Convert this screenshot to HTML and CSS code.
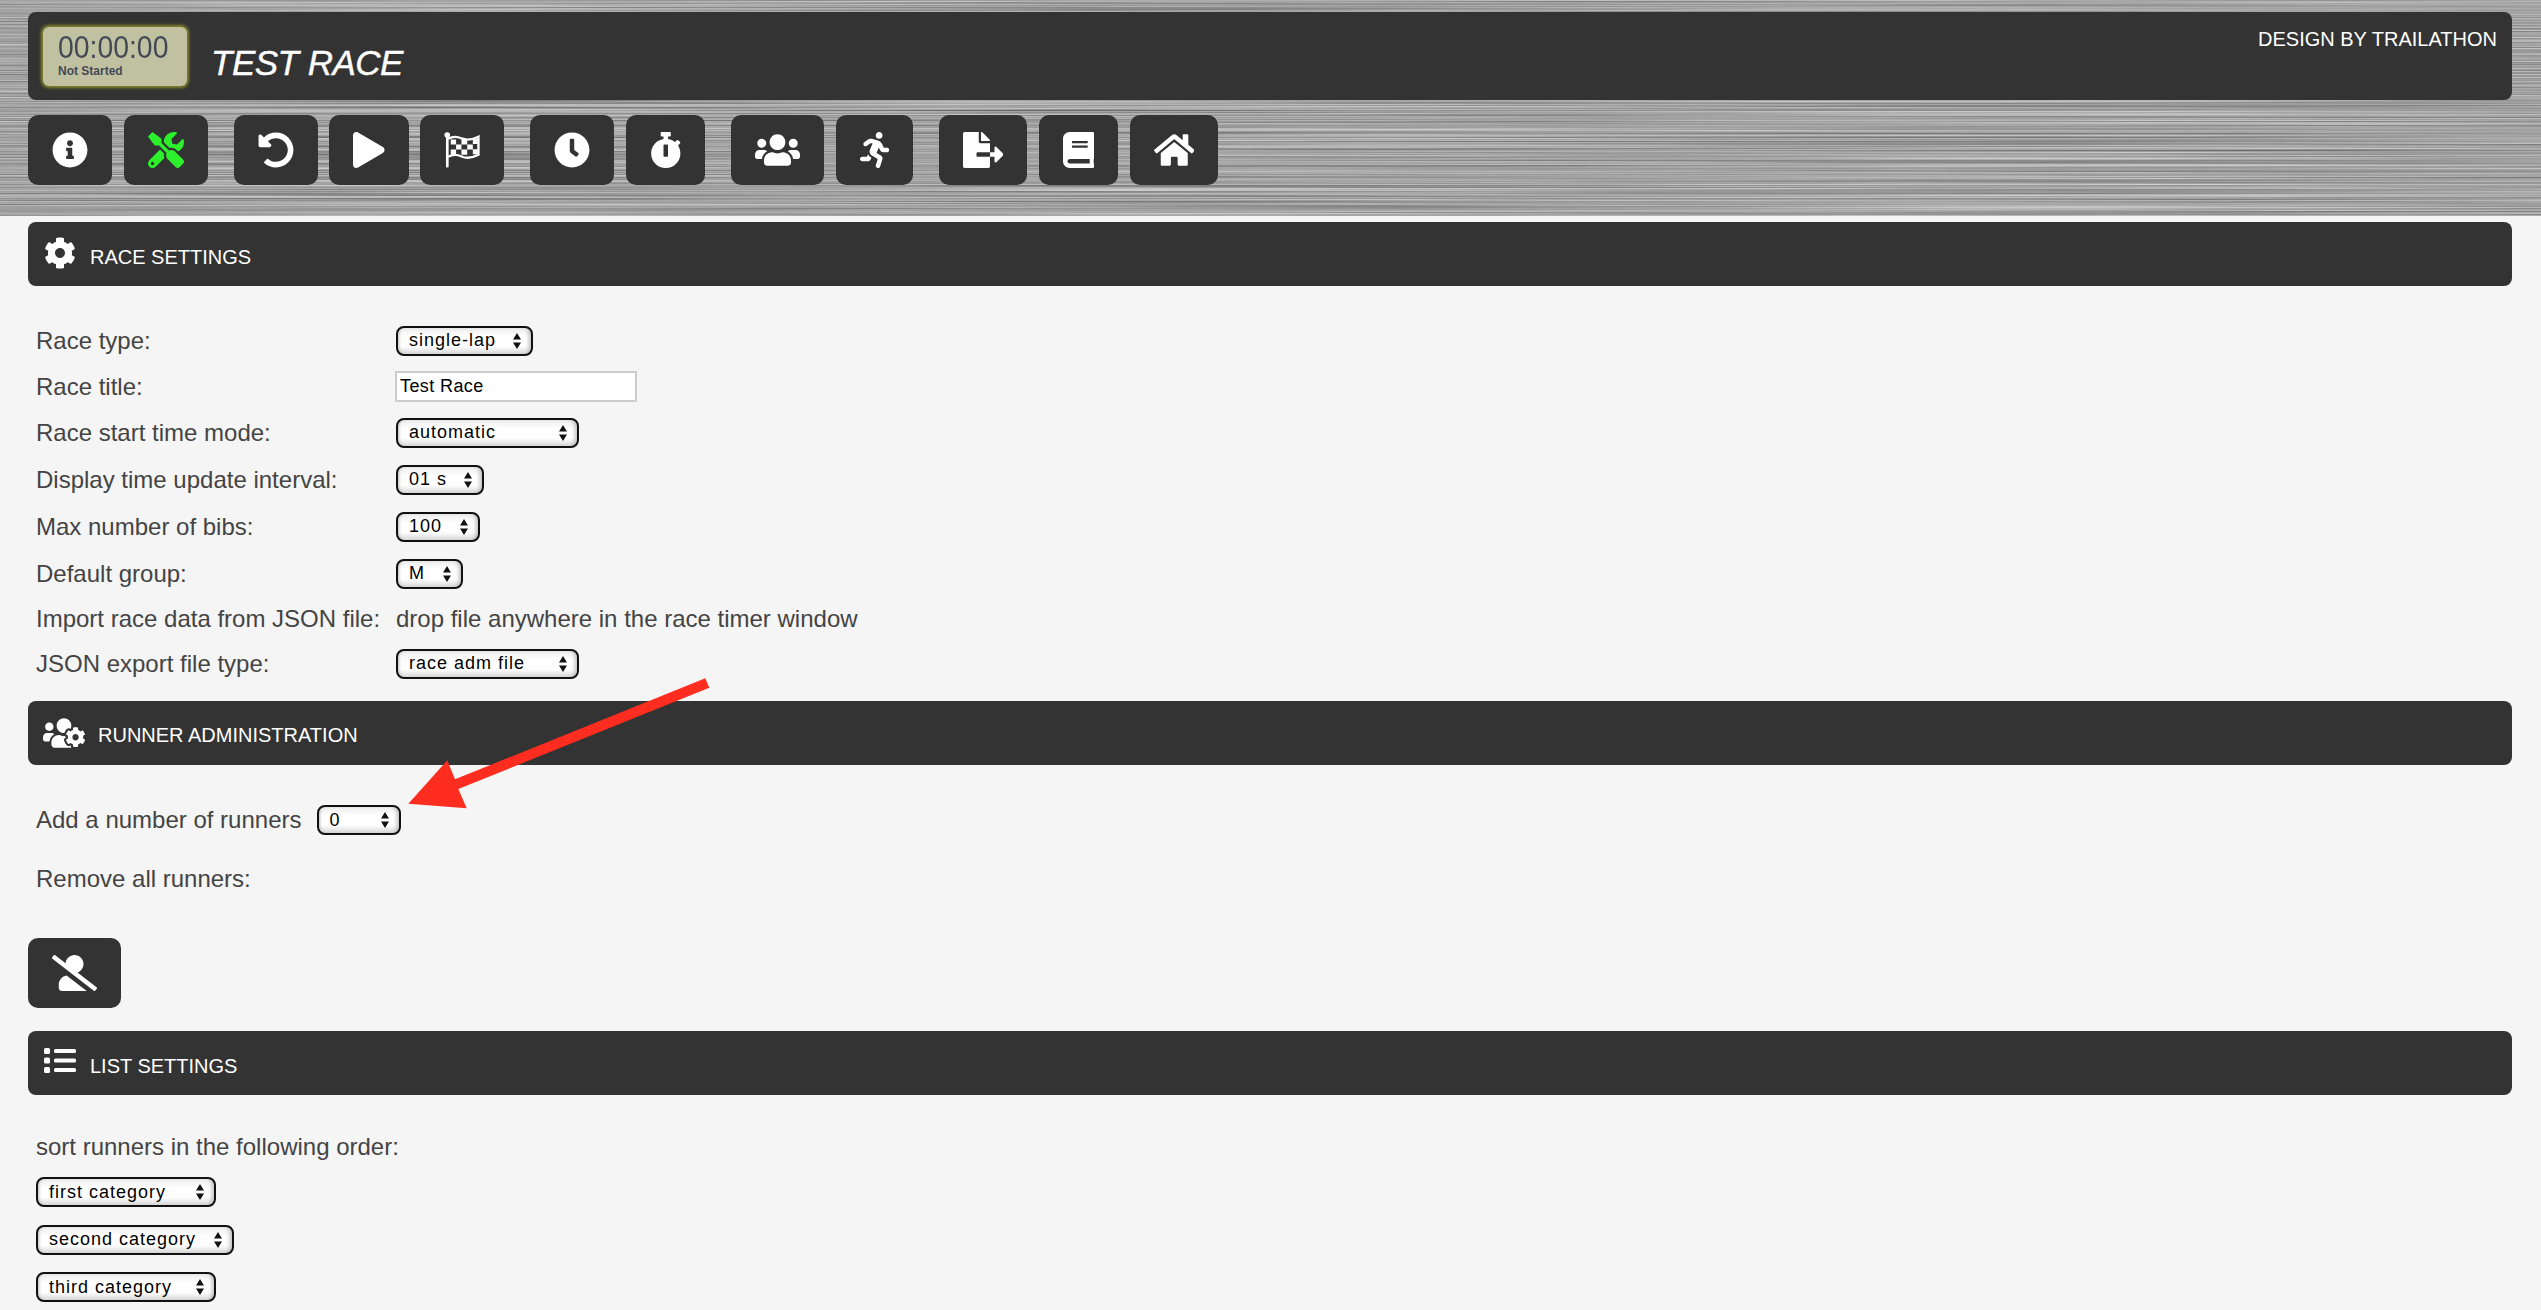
FILE: index.html
```html
<!DOCTYPE html>
<html lang="en">
<head>
  <meta charset="UTF-8">
  <title>Test Race</title>
  <link rel="stylesheet" href="styles.css">
</head>
<body>

  <header class="top">
    <div class="title-bar">
      <div class="timer">
        <div class="digits"><span>00:00:00</span></div>
        <div class="state">Not Started</div>
      </div>
      <h1 class="race-name">TEST RACE</h1>
      <div class="credit">DESIGN BY TRAILATHON</div>
    </div>

    <nav class="toolbar">
      <div class="tool-group">
        <button class="tool" title="Info"><svg class="icon" viewBox="0 0 512 512"><path d="M256 8C119.043 8 8 119.083 8 256c0 136.997 111.043 248 248 248s248-111.003 248-248C504 119.083 392.957 8 256 8zm0 110c23.196 0 42 18.804 42 42s-18.804 42-42 42-42-18.804-42-42 18.804-42 42-42zm56 254c0 6.627-5.373 12-12 12h-88c-6.627 0-12-5.373-12-12v-24c0-6.627 5.373-12 12-12h12v-64h-12c-6.627 0-12-5.373-12-12v-24c0-6.627 5.373-12 12-12h64c6.627 0 12 5.373 12 12v100h12c6.627 0 12 5.373 12 12v24z"/></svg></button>
        <button class="tool active" title="Settings"><svg class="icon" viewBox="0 0 512 512"><path d="M501.1 395.7L384 278.6c-23.1-23.1-57.6-27.6-85.4-13.9L192 158.1V96L64 0 0 64l96 128h62.1l106.6 106.6c-13.6 27.8-9.2 62.3 13.9 85.4l117.1 117.1c14.6 14.6 38.2 14.6 52.7 0l52.7-52.7c14.5-14.6 14.5-38.2-.1-52.7zM331.7 225c28.3 0 54.9 11 74.9 31l19.4 19.4c15.8-6.9 30.8-16.5 43.8-29.5 37.1-37.1 49.7-89.3 37.9-136.7-2.2-9-13.5-12.1-20.1-5.5l-74.4 74.4-67.9-11.3L334 98.9l74.4-74.4c6.6-6.6 3.4-17.9-5.7-20.2-47.4-11.7-99.6.9-136.6 37.9-28.5 28.5-41.9 66.1-41.2 103.6l82.1 82.1c8.1-1.9 16.5-2.9 24.7-2.9zm-103.9 82l-56.7-56.7L18.7 402.8c-25 25-25 65.5 0 90.5s65.5 25 90.5 0l123.6-123.6c-7.6-19.9-9.9-41.6-5-62.7zM64 472c-13.2 0-24-10.8-24-24 0-13.3 10.7-24 24-24s24 10.7 24 24c0 13.2-10.7 24-24 24z"/></svg></button>
      </div>
      <div class="tool-group">
        <button class="tool" title="Reset"><svg class="icon" viewBox="0 0 512 512"><path d="M255.545 8c-66.269.119-126.438 26.233-170.86 68.685L48.971 40.971C33.851 25.851 8 36.559 8 57.941V192c0 13.255 10.745 24 24 24h134.059c21.382 0 32.09-25.851 16.971-40.971l-41.75-41.75c30.864-28.899 70.801-44.907 113.23-45.273 92.398-.798 170.283 73.977 169.484 169.442C423.236 348.009 349.816 424 256 424c-41.127 0-79.997-14.678-110.63-41.556-4.743-4.161-11.906-3.908-16.368.553L89.34 422.659c-4.872 4.872-4.631 12.815.482 17.433C133.798 479.813 192.074 504 256 504c136.966 0 247.999-111.033 248-247.998C504.001 119.193 392.354 7.755 255.545 8z"/></svg></button>
        <button class="tool" title="Start"><svg class="icon" viewBox="0 0 448 512"><path d="M424.4 214.7L72.4 6.6C43.8-10.3 0 6.1 0 47.9V464c0 37.5 40.7 60.1 72.4 41.3l352-208c31.4-18.5 31.5-64.1 0-82.6z"/></svg></button>
        <button class="tool" title="Finish"><svg class="icon" viewBox="0 0 512 512"><circle cx="46" cy="42" r="40"/><rect x="28" y="50" width="38" height="456" rx="14"/><path class="flag-line" d="M60 96C120 62 190 64 250 92c70 30 150 20 240-24v256c-90 46-170 56-240 24-60-28-130-30-190 4"/><path d="M96 106h76v72H96zM248 106h82v72h-82zM410 100h70v72h-70zM172 178h76v72h-76zM330 178h80v72h-80zM96 250h76v72H96zM248 250h82v72h-82zM410 244h70v72h-70z"/></svg></button>
      </div>
      <div class="tool-group">
        <button class="tool" title="Clock"><svg class="icon" viewBox="0 0 512 512"><path d="M256,8C119,8,8,119,8,256S119,504,256,504,504,393,504,256,393,8,256,8Zm92.49,313h0l-20,25a16,16,0,0,1-22.49,2.5h0l-67-49.72a40,40,0,0,1-15-31.23V112a16,16,0,0,1,16-16h32a16,16,0,0,1,16,16V256l58,42.5A16,16,0,0,1,348.49,321Z"/></svg></button>
        <button class="tool" title="Stopwatch"><svg class="icon" viewBox="0 0 448 512"><path d="M432 304c0 114.9-93.1 208-208 208S16 418.9 16 304c0-104 76.3-190.2 176-205.5V64h-28c-6.6 0-12-5.4-12-12V12c0-6.6 5.4-12 12-12h120c6.6 0 12 5.4 12 12v40c0 6.6-5.4 12-12 12h-28v34.5c37.5 5.8 71.7 21.6 99.7 44.6l27.5-27.5c4.7-4.7 12.3-4.7 17 0l28.3 28.3c4.7 4.7 4.7 12.3 0 17l-29.4 29.4-.6.6C419.7 223.3 432 262.2 432 304zm-176 36V188.5c0-6.6-5.4-12-12-12h-40c-6.6 0-12 5.4-12 12V340c0 6.6 5.4 12 12 12h40c6.6 0 12-5.4 12-12z"/></svg></button>
      </div>
      <div class="tool-group">
        <button class="tool" title="Runners"><svg class="icon" viewBox="0 0 640 512"><path d="M96 224c35.3 0 64-28.7 64-64s-28.7-64-64-64-64 28.7-64 64 28.7 64 64 64zm448 0c35.3 0 64-28.7 64-64s-28.7-64-64-64-64 28.7-64 64 28.7 64 64 64zm32 32h-64c-17.6 0-33.5 7.1-45.1 18.6 40.3 22.1 68.9 62 75.1 109.4h66c17.7 0 32-14.3 32-32v-32c0-35.3-28.7-64-64-64zm-256 0c61.9 0 112-50.1 112-112S381.9 32 320 32 208 82.1 208 144s50.1 112 112 112zm76.8 32h-8.3c-20.8 10-43.9 16-68.5 16s-47.6-6-68.5-16h-8.3C179.6 288 128 339.6 128 403.2V432c0 26.5 21.5 48 48 48h288c26.5 0 48-21.5 48-48v-28.8c0-63.6-51.6-115.2-115.2-115.2zm-223.7-13.4C161.5 263.1 145.6 256 128 256H64c-35.3 0-64 28.7-64 64v32c0 17.7 14.3 32 32 32h65.9c6.3-47.4 34.9-87.3 75.2-109.4z"/></svg></button>
        <button class="tool" title="Running"><svg class="icon" viewBox="0 0 416 512"><path d="M272 96c26.51 0 48-21.49 48-48S298.51 0 272 0s-48 21.49-48 48 21.49 48 48 48zM113.69 317.47l-14.8 34.52H32c-17.67 0-32 14.33-32 32s14.33 32 32 32h77.45c19.25 0 36.58-11.44 44.11-29.09l8.79-20.52-10.67-6.3c-17.32-10.23-30.06-25.37-37.99-42.61zM384 223.99h-44.03l-26.06-53.25c-12.5-25.55-35.45-44.23-61.78-50.94l-71.08-21.14c-28.3-6.8-57.77-.55-80.84 17.14l-39.67 30.41c-14.03 10.75-16.69 30.83-5.92 44.86s30.84 16.66 44.86 5.92l39.69-30.41c7.67-5.89 17.44-8 25.27-6.14l14.7 4.37-37.46 87.39c-12.62 29.48-1.31 64.01 26.3 80.31l84.98 50.17-27.47 87.73c-5.28 16.86 4.11 34.81 20.97 40.09 3.19 1 6.41 1.48 9.58 1.48 13.61 0 26.23-8.77 30.52-22.45l31.64-101.06c5.91-20.77-2.89-43.08-21.64-54.39l-61.24-36.14 31.31-78.28 20.27 41.43c8 16.34 24.92 26.89 43.11 26.89H384c17.67 0 32-14.33 32-32s-14.33-31.99-32-31.99z"/></svg></button>
      </div>
      <div class="tool-group">
        <button class="tool" title="Export"><svg class="icon" viewBox="0 0 576 512"><path d="M384 121.9c0-6.3-2.5-12.4-7-16.9L279.1 7c-4.5-4.5-10.6-7-17-7H256v128h128zM571 308l-95.7-96.4c-10.1-10.1-27.4-3-27.4 11.3V288h-64v64h64v65.2c0 14.3 17.3 21.4 27.4 11.3L571 332c6.6-6.6 6.6-17.4 0-24zm-379 28v-32c0-8.8 7.2-16 16-16h176V160H248c-13.2 0-24-10.8-24-24V0H24C10.7 0 0 10.7 0 24v464c0 13.3 10.7 24 24 24h336c13.3 0 24-10.7 24-24V352H208c-8.8 0-16-7.2-16-16z"/></svg></button>
        <button class="tool" title="Manual"><svg class="icon" viewBox="0 0 448 512"><path d="M448 360V24c0-13.3-10.7-24-24-24H96C43 0 0 43 0 96v320c0 53 43 96 96 96h328c13.3 0 24-10.7 24-24v-16c0-7.5-3.5-14.3-8.9-18.7-4.2-15.4-4.2-59.3 0-74.7 5.4-4.3 8.9-11.1 8.9-18.6zM128 134c0-3.3 2.7-6 6-6h212c3.3 0 6 2.7 6 6v20c0 3.3-2.7 6-6 6H134c-3.3 0-6-2.7-6-6v-20zm0 64c0-3.3 2.7-6 6-6h212c3.3 0 6 2.7 6 6v20c0 3.3-2.7 6-6 6H134c-3.3 0-6-2.7-6-6v-20zm253.4 250H96c-17.7 0-32-14.3-32-32 0-17.6 14.4-32 32-32h285.4c-1.9 17.1-1.9 46.9 0 64z"/></svg></button>
        <button class="tool" title="Home"><svg class="icon" viewBox="0 0 576 512"><path d="M280.37 148.26L96 300.11V464a16 16 0 0 0 16 16l112.06-.29a16 16 0 0 0 15.92-16V368a16 16 0 0 1 16-16h64a16 16 0 0 1 16 16v95.64a16 16 0 0 0 16 16.05L464 480a16 16 0 0 0 16-16V300L295.67 148.26a12.19 12.19 0 0 0-15.3 0zM571.6 251.47L488 182.56V44.05a12 12 0 0 0-12-12h-56a12 12 0 0 0-12 12v72.61L318.47 43a48 48 0 0 0-61 0L4.34 251.47a12 12 0 0 0-1.6 16.9l25.5 31A12 12 0 0 0 45.15 301l235.22-193.74a12.19 12.19 0 0 1 15.3 0L530.9 301a12 12 0 0 0 16.9-1.6l25.5-31a12 12 0 0 0-1.7-16.93z"/></svg></button>
      </div>
    </nav>
  </header>

  <section>
    <h2 class="bar">
      <svg class="bar-icon cog" viewBox="0 0 512 512"><path d="M487.4 315.7l-42.6-24.6c4.3-23.2 4.3-47 0-70.2l42.6-24.6c4.9-2.8 7.1-8.6 5.5-14-11.1-35.6-30-67.8-54.7-94.6-3.8-4.1-10-5.1-14.8-2.3L380.8 110c-17.9-15.4-38.5-27.3-60.8-35.1V25.8c0-5.6-3.9-10.5-9.4-11.7-36.7-8.2-74.3-7.8-109.2 0-5.5 1.2-9.4 6.1-9.4 11.7V75c-22.2 7.9-42.8 19.8-60.8 35.1L88.7 85.5c-4.9-2.8-11-1.9-14.8 2.3-24.7 26.7-43.6 58.9-54.7 94.6-1.7 5.4.6 11.2 5.5 14L67.3 221c-4.3 23.2-4.3 47 0 70.2l-42.6 24.6c-4.9 2.8-7.1 8.6-5.5 14 11.1 35.6 30 67.8 54.7 94.6 3.8 4.1 10 5.1 14.8 2.3l42.6-24.6c17.9 15.4 38.5 27.3 60.8 35.1v49.2c0 5.6 3.9 10.5 9.4 11.7 36.7 8.2 74.3 7.8 109.2 0 5.5-1.2 9.4-6.1 9.4-11.7v-49.2c22.2-7.9 42.8-19.8 60.8-35.1l42.6 24.6c4.9 2.8 11 1.9 14.8-2.3 24.7-26.7 43.6-58.9 54.7-94.6 1.5-5.5-.7-11.3-5.6-14.1zM256 336c-44.1 0-80-35.9-80-80s35.9-80 80-80 80 35.9 80 80-35.9 80-80 80z"/></svg>
      <span class="bar-text">RACE SETTINGS</span>
    </h2>
    <div class="settings">
      <div class="row">
        <label class="row-label">Race type:</label>
        <select class="w-type"><option>single-lap</option><option>multi-lap</option></select>
      </div>
      <div class="row row-input">
        <label class="row-label">Race title:</label>
        <input class="title-input" type="text" value="Test Race">
      </div>
      <div class="row">
        <label class="row-label">Race start time mode:</label>
        <select class="w-wide"><option>automatic</option><option>manual</option></select>
      </div>
      <div class="row">
        <label class="row-label">Display time update interval:</label>
        <select class="w-time"><option>01 s</option><option>05 s</option><option>10 s</option></select>
      </div>
      <div class="row">
        <label class="row-label">Max number of bibs:</label>
        <select class="w-small"><option>100</option><option>200</option><option>500</option></select>
      </div>
      <div class="row">
        <label class="row-label">Default group:</label>
        <select class="w-group"><option>M</option><option>F</option></select>
      </div>
      <div class="row row-text">
        <span class="row-label">Import race data from JSON file:</span>
        <span>drop file anywhere in the race timer window</span>
      </div>
      <div class="row">
        <label class="row-label">JSON export file type:</label>
        <select class="w-wide"><option>race adm file</option><option>results file</option></select>
      </div>
    </div>
  </section>

  <section>
    <h2 class="bar bar-runners">
      <svg class="bar-icon users-cog" viewBox="0 0 640 512"><path d="M610.5 341.3c2.6-14.1 2.6-28.5 0-42.6l25.8-14.9c3-1.7 4.3-5.2 3.3-8.5-6.7-21.6-18.2-41.2-33.2-57.4-2.3-2.5-6-3.1-9-1.4l-25.8 14.9c-10.9-9.3-23.4-16.5-36.9-21.3v-29.8c0-3.4-2.4-6.4-5.7-7.1-22.3-5-45-4.8-66.2 0-3.3.7-5.7 3.7-5.7 7.1v29.8c-13.5 4.8-26 12-36.9 21.3l-25.8-14.9c-2.9-1.7-6.7-1.1-9 1.4-15 16.2-26.5 35.8-33.2 57.4-1 3.3.4 6.8 3.3 8.5l25.8 14.9c-2.6 14.1-2.6 28.5 0 42.6l-25.8 14.9c-3 1.7-4.3 5.2-3.3 8.5 6.7 21.6 18.2 41.1 33.2 57.4 2.3 2.5 6 3.1 9 1.4l25.8-14.9c10.9 9.3 23.4 16.5 36.9 21.3v29.8c0 3.4 2.4 6.4 5.7 7.1 22.3 5 45 4.8 66.2 0 3.3-.7 5.7-3.7 5.7-7.1v-29.8c13.5-4.8 26-12 36.9-21.3l25.8 14.9c2.9 1.7 6.7 1.1 9-1.4 15-16.2 26.5-35.8 33.2-57.4 1-3.3-.4-6.8-3.3-8.5l-25.8-14.9zM496 368.5c-26.8 0-48.5-21.8-48.5-48.5s21.8-48.5 48.5-48.5 48.5 21.8 48.5 48.5-21.7 48.5-48.5 48.5zM96 224c35.3 0 64-28.7 64-64s-28.7-64-64-64-64 28.7-64 64 28.7 64 64 64zm224 32c1.9 0 3.7-.5 5.6-.6 8.3-21.7 20.5-42.1 36.3-59.2 7.4-8 17.9-12.6 28.9-12.6 6.9 0 13.7 1.8 19.6 5.3l7.9 4.6c.8-.5 1.6-.9 2.4-1.4 7-14.6 11.2-30.8 11.2-48 0-61.9-50.1-112-112-112S208 82.1 208 144c0 61.9 50.1 112 112 112zm105.2 194.5c-2.3-1.2-4.6-2.6-6.8-3.9-8.2 4.8-15.3 9.8-27.5 9.8-10.9 0-21.4-4.6-28.9-12.6-18.3-19.8-32.3-43.9-40.2-69.6-10.7-34.5 24.9-49.7 25.8-50.3-.1-2.6-.1-5.2 0-7.8l-7.9-4.6c-3.8-2.2-7-5-9.8-8.1-3.3.2-6.5.6-9.8.6-24.6 0-47.6-6-68.5-16h-8.3C179.6 288 128 339.6 128 403.2V432c0 26.5 21.5 48 48 48h255.4c-3.7-6-6.2-12.8-6.2-20.3v-9.2zM173.1 274.6C161.5 263.1 145.6 256 128 256H64c-35.3 0-64 28.7-64 64v32c0 17.7 14.3 32 32 32h65.9c6.3-47.4 34.9-87.3 75.2-109.4z"/></svg>
      <span class="bar-text">RUNNER ADMINISTRATION</span>
    </h2>
    <div class="add-runners">
      <label>Add a number of runners</label>
      <select class="w-small"><option>0</option><option>10</option><option>50</option></select>
    </div>
    <p class="remove-label">Remove all runners:</p>
    <button class="tool tool-remove" title="Remove all runners"><svg class="icon" viewBox="0 0 640 512"><path d="M633.8 458.1L362.3 248.3C412.1 230.7 448 183.8 448 128 448 57.3 390.7 0 320 0c-67.1 0-121.5 51.8-126.9 117.4L45.5 3.4C38.5-2 28.5-.8 23 6.2L3.4 31.4c-5.4 7-4.2 17 2.8 22.4l588.4 454.7c7 5.4 17 4.2 22.5-2.8l19.6-25.3c5.4-6.8 4.1-16.9-2.9-22.3zM96 422.4V464c0 26.5 21.5 48 48 48h350.2L207.4 290.3C144.2 301.3 96 356 96 422.4z"/></svg></button>
  </section>

  <section>
    <h2 class="bar bar-list">
      <svg class="bar-icon list" viewBox="0 0 32 25"><rect y="0" width="6" height="6" rx="1.5"/><rect y="9.5" width="6" height="6" rx="1.5"/><rect y="19" width="6" height="6" rx="1.5"/><rect x="10" y="1" width="22" height="4" rx="1.5"/><rect x="10" y="10.5" width="22" height="4" rx="1.5"/><rect x="10" y="20" width="22" height="4" rx="1.5"/></svg>
      <span class="bar-text">LIST SETTINGS</span>
    </h2>
    <p class="sort-label">sort runners in the following order:</p>
    <div class="sort-list">
      <select class="w-sort"><option>first category</option></select>
      <select class="w-sort-long"><option>second category</option></select>
      <select class="w-sort"><option>third category</option></select>
    </div>
  </section>

  <!-- red annotation arrow pointing at the runners select -->
  <svg class="callout" viewBox="400 670 320 150"><polygon points="705.3,678.3 709.3,687.7 458.3,789 466.7,808.3 408.3,803.7 447.3,760.3 455,779.3"/></svg>

</body>
</html>
```

FILE: styles.css
```css
* {
  box-sizing: border-box;
}
body {
  margin: 0;
  background-color: #f5f5f5;
  color: #444;
  font-family: "Liberation Sans", Arial, sans-serif;
  font-size: 24px;
}

/* header with brushed metal background */
.top {
  height: 216px;
  padding: 12px 29px 0 28px;
  background-color: #999;
  background-image: url("data:image/svg+xml,%3Csvg xmlns='http://www.w3.org/2000/svg' width='2541' height='216'%3E%3Cfilter id='m' x='0' y='0' width='100%25' height='100%25' color-interpolation-filters='sRGB'%3E%3CfeTurbulence type='fractalNoise' baseFrequency='0.0012 0.7' numOctaves='4' seed='7'/%3E%3CfeColorMatrix values='0.55 0 0 0 0.36 0.55 0 0 0 0.36 0.55 0 0 0 0.36 0 0 0 0 1'/%3E%3C/filter%3E%3Crect width='2541' height='216' filter='url(%23m)'/%3E%3C/svg%3E");
}
.title-bar {
  display: flex;
  align-items: center;
  height: 88px;
  padding: 0 15px;
  background-color: #333;
  border-radius: 8px;
  color: #fff;
}
.timer {
  width: 144px;
  height: 59px;
  padding: 8px 15px 0;
  background-color: #c0c1a1;
  border-radius: 6px;
  box-shadow: 0 0 3px 2px #85852c;
  color: #444a55;
}
.digits {
  height: 24px;
  line-height: 24px;
  font-size: 30.5px;
  white-space: nowrap;
}
.digits span {
  display: inline-block;
  transform: scaleX(0.93);
  transform-origin: left center;
}
.state {
  margin-top: 5px;
  font-size: 12px;
  font-weight: bold;
}
.race-name {
  margin: 0 0 0 24px;
  padding-top: 14px;
  font-size: 35px;
  font-style: italic;
  font-weight: normal;
  letter-spacing: -0.5px;
  -webkit-text-stroke: 0.4px #fff;
}
.credit {
  align-self: flex-start;
  margin-left: auto;
  padding-top: 16px;
  font-size: 20px;
}

.toolbar {
  display: flex;
  gap: 26px;
  margin-top: 15px;
}
.tool-group {
  display: flex;
  gap: 11.5px;
}
.tool {
  display: flex;
  align-items: center;
  height: 70px;
  padding: 0 24px;
  background-color: #333;
  border: none;
  border-radius: 10px;
  color: #fff;
  cursor: pointer;
}
.tool.active {
  color: #2bf02b;
}
.icon {
  display: block;
  height: 36px;
  fill: currentColor;
}
.flag-line {
  fill: none;
  stroke: #fff;
  stroke-width: 34;
}

/* section title bars */
.bar {
  display: flex;
  align-items: center;
  height: 64px;
  margin: 6px 29px 0 28px;
  padding-left: 16px;
  background-color: #333;
  border-radius: 8px;
  color: #fff;
  font-size: 20px;
  font-weight: normal;
}
.bar-icon {
  fill: #fff;
}
.cog {
  width: 32px;
  height: 32px;
  margin-right: 14px;
  margin-bottom: 3px;
}
.bar-text {
  margin-top: 7px;
}
.bar-runners {
  margin-top: 14px;
  padding-left: 15px;
}
.bar-runners .bar-text {
  margin-top: 4px;
}
.users-cog {
  width: 42px;
  height: 34px;
  margin-right: 13px;
}
.bar-list {
  margin-top: 23px;
}
.list {
  width: 32px;
  height: 25px;
  margin-right: 14px;
  margin-bottom: 5px;
}

/* settings rows */
.settings {
  margin: 0 29px 0 36px;
  padding-top: 31px;
}
.row {
  display: flex;
  align-items: center;
  height: 47px;
}
.row-input {
  height: 45px;
}
.row-text {
  height: 43px;
}
.row-label {
  width: 360px;
}

select {
  appearance: none;
  -webkit-appearance: none;
  height: 30px;
  padding: 0 0 1px 11px;
  background-color: #fff;
  background-image: url("data:image/svg+xml,%3Csvg xmlns='http://www.w3.org/2000/svg' width='8' height='16'%3E%3Cpath d='M4 0l4 6.5H0zM4 16l4-6.5H0z' fill='%23111'/%3E%3C/svg%3E"), linear-gradient(#eee, #fff 35%, #fff 70%, #d8d8d8);
  background-repeat: no-repeat;
  background-position: right 10px center, 0 0;
  border: 2px solid #111;
  border-radius: 8px;
  box-shadow: inset 3px 0 3px -2px #bbb, inset -4px 0 4px -2px #bbb;
  color: #000;
  font-family: "Liberation Sans", Arial, sans-serif;
  font-size: 18px;
  letter-spacing: 1px;
}
.w-type { width: 137px; }
.w-wide { width: 183px; }
.w-time { width: 88px; }
.w-small { width: 84px; }
.w-group { width: 67px; }
.w-sort { width: 180px; }
.w-sort-long { width: 198px; }

.title-input {
  width: 242px;
  height: 31px;
  margin-left: -1px;
  padding: 0 3px;
  background-color: #fff;
  border: 2px solid #ccc;
  color: #000;
  font-family: "Liberation Sans", Arial, sans-serif;
  font-size: 18px;
  letter-spacing: 0.4px;
}

/* runner administration */
.add-runners {
  display: flex;
  align-items: center;
  gap: 15px;
  margin: 40px 0 0 36px;
}
.remove-label {
  margin: 30px 0 0 36px;
  line-height: 28px;
}
.tool-remove {
  margin: 45px 0 0 28px;
}

/* list settings */
.sort-label {
  margin: 38px 0 0 36px;
  line-height: 28px;
}
.sort-list {
  display: flex;
  flex-direction: column;
  align-items: flex-start;
  gap: 17.5px;
  margin: 16px 0 0 36px;
}

.callout {
  position: absolute;
  left: 400px;
  top: 670px;
  width: 320px;
  height: 150px;
  fill: #ff2d1f;
  pointer-events: none;
}
```
